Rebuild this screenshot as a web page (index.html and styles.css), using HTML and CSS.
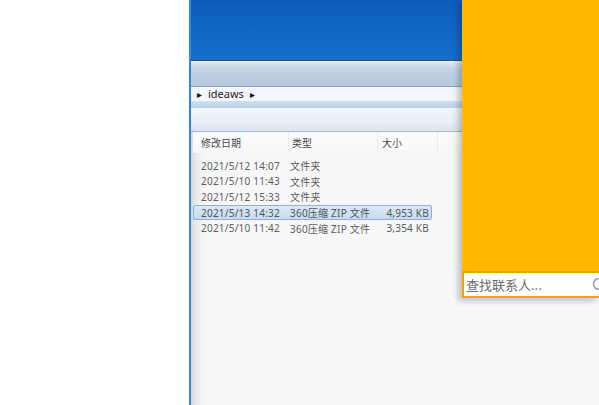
FILE: index.html
```html
<!DOCTYPE html>
<html>
<head>
<meta charset="utf-8">
<link rel="stylesheet" href="styles.css">
</head>
<body>
<div class="desktop">
  <div class="explorer">
    <div class="titlebar"></div>
    <div class="toolbar"></div>
    <div class="address">
      <span class="tri">&#9656;</span><span class="crumb">ideaws</span><span class="tri">&#9656;</span>
    </div>
    <div class="strip"></div>
    <div class="commandbar"></div>
    <div class="content">
      <div class="headers">
        <span class="col c-date">修改日期</span>
        <span class="col c-type">类型</span>
        <span class="col c-size">大小</span>
        <span class="col c-rest"></span>
      </div>
      <div class="rows">
        <div class="row"><span class="c-date">2021/5/12 14:07</span><span class="c-type">文件夹</span><span class="c-size"></span></div>
        <div class="row"><span class="c-date">2021/5/10 11:43</span><span class="c-type">文件夹</span><span class="c-size"></span></div>
        <div class="row"><span class="c-date">2021/5/12 15:33</span><span class="c-type">文件夹</span><span class="c-size"></span></div>
        <div class="row selected"><span class="c-date">2021/5/13 14:32</span><span class="c-type">360压缩 ZIP 文件</span><span class="c-size">4,953 KB</span></div>
        <div class="row"><span class="c-date">2021/5/10 11:42</span><span class="c-type">360压缩 ZIP 文件</span><span class="c-size">3,354 KB</span></div>
      </div>
    </div>
  </div>
  <div class="contacts">
    <div class="panel-body"></div>
    <div class="search">
      <span class="search-text">查找联系人...</span>
      <svg class="search-icon" width="16" height="16" viewBox="0 0 16 16"><circle cx="8" cy="7" r="5.5" fill="none" stroke="#9a9a9a" stroke-width="1.5"/></svg>
    </div>
  </div>
</div>
</body>
</html>
```

FILE: styles.css
```css
* { box-sizing: border-box; }
html, body { margin: 0; padding: 0; }
body {
  width: 599px;
  height: 405px;
  overflow: hidden;
  background: #ffffff;
  font-family: "Noto Sans", "Noto Sans CJK SC", sans-serif;
}
.desktop {
  position: relative;
  width: 599px;
  height: 405px;
  overflow: hidden;
}
.explorer {
  position: absolute;
  left: 189px;
  top: 0;
  width: 410px;
  height: 405px;
  border-left: 2px solid #2a8be0;
  background: #f7f7f7;
  display: flex;
  flex-direction: column;
}
.titlebar {
  height: 61px;
  flex: none;
  background: linear-gradient(180deg, #0b5bbd 0%, #1165c5 50%, #1470cc 100%);
  border-bottom: 1px solid #3b4a5a;
}
.toolbar {
  height: 26px;
  flex: none;
  background: linear-gradient(180deg, #dde7f1 0%, #c3d3e4 30%, #b4c9de 100%);
  border-top: 1px solid #e9eff5;
  border-bottom: 1px solid #8d9eb2;
}
.address {
  height: 14px;
  flex: none;
  background: #f3f6fa;
  display: flex;
  align-items: center;
  gap: 6px;
  padding-left: 6px;
  font-size: 11px;
  color: #1e1e1e;
  line-height: 14px;
}
.address .tri { font-size: 10px; color: #111; }
.strip {
  height: 7px;
  flex: none;
  background: linear-gradient(180deg, #cfe0f0, #b9d0e8);
}
.commandbar {
  height: 24px;
  flex: none;
  background: linear-gradient(180deg, #f4f7fb 0%, #e7eef6 60%, #dbe5ef 100%);
  border-bottom: 1px solid #a5b6c8;
}
.content {
  flex: 1;
  background: linear-gradient(90deg, #d9d9d9 0px, #ececec 6px, #f5f5f5 14px, #f7f7f7 22px);
  padding-left: 2px;
}
.headers {
  height: 21px;
  display: flex;
  align-items: center;
  font-size: 10px;
  color: #4a4a4a;
  background: linear-gradient(180deg, #fbfbfb, #f7f7f7);
}
.headers .col {
  height: 21px;
  display: flex;
  align-items: center;
  border-right: 1px solid #ececec;
}
.headers .c-date { width: 96px; padding-left: 8px; }
.headers .c-type { width: 89px; padding-left: 3px; }
.headers .c-size { width: 60px; padding-left: 4px; }
.headers .c-rest { width: 30px; }
.rows {
  padding-top: 5px;
  display: flex;
  flex-direction: column;
}
.row {
  height: 15.6px;
  display: flex;
  align-items: center;
  font-size: 10px;
  letter-spacing: 0.22px;
  color: #5c5c5c;
  width: 239px;
  margin-left: 0;
  border: 1px solid transparent;
  border-radius: 2px;
  white-space: nowrap;
}
.row .c-date { width: 96px; padding-left: 7px; }
.row .c-type { width: 80px; }
.row .c-size { width: 61px; text-align: right; padding-right: 2px; }
.row.selected {
  background: linear-gradient(180deg, #dce8f5, #c7daef);
  border-color: #93b0d2;
  color: #4f5560;
}
.contacts {
  position: absolute;
  left: 462px;
  top: 0;
  width: 137px;
  height: 298px;
  display: flex;
  flex-direction: column;
  box-shadow: -4px 3px 6px rgba(0,0,0,0.22);
}
.panel-body {
  flex: 1;
  background: #ffb900;
}
.search {
  height: 27px;
  background: #ffffff;
  border: 2px solid #e8a600;
  border-right: none;
  display: flex;
  align-items: center;
  padding-left: 2px;
  justify-content: space-between;
}
.search-text {
  font-size: 13px;
  color: #6a6a6a;
  font-family: "Noto Sans CJK SC", sans-serif;
}
.search-icon { margin-right: -8px; }
```
